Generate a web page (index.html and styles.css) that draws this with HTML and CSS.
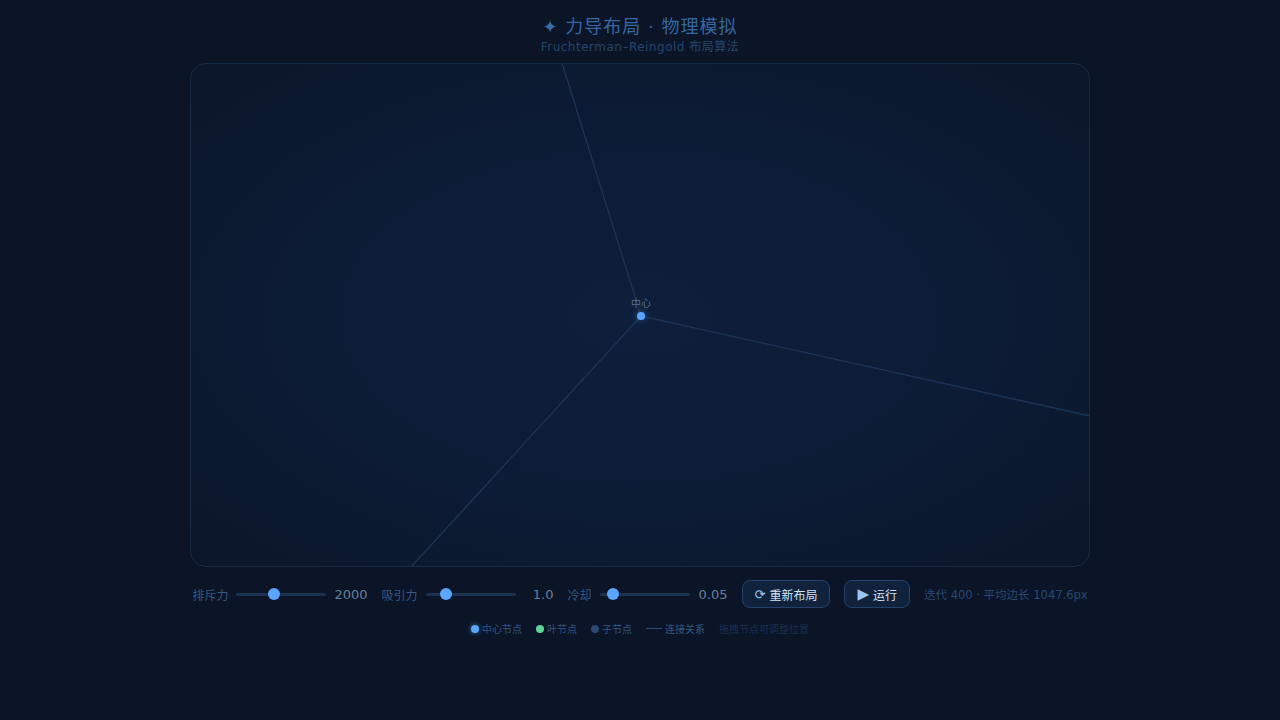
FILE: index.html
```html
<!DOCTYPE html>
<html lang="zh-CN">
<head>
  <meta charset="UTF-8">
  <meta name="viewport" content="width=device-width, initial-scale=1.0">
  <title>力导布局</title>
  <link rel="stylesheet" href="styles.css">
</head>
<body>
  <div class="page">
    <header class="head">
      <h1 class="title"><span class="spark">✦</span> 力导布局 · 物理模拟</h1>
      <p class="subtitle">Fruchterman–Reingold 布局算法</p>
    </header>

    <div class="stage">
      <svg class="edges" viewBox="0 0 900 504" width="900" height="504">
        <line x1="451" y1="253" x2="372" y2="0" />
        <line x1="451" y1="253" x2="900" y2="353" />
        <line x1="451" y1="253" x2="221" y2="504" />
      </svg>
      <div class="node" style="left: 451px; top: 253px;">
        <span class="node-label">中心</span>
      </div>
    </div>

    <div class="controls">
      <label class="ctl">
        <span class="ctl-name">排斥力</span>
        <input type="range" min="0" max="5000" value="2000">
        <span class="ctl-val">2000</span>
      </label>
      <label class="ctl">
        <span class="ctl-name">吸引力</span>
        <input type="range" min="0.1" max="5" step="0.1" value="1.0">
        <span class="ctl-val">1.0</span>
      </label>
      <label class="ctl">
        <span class="ctl-name">冷却</span>
        <input type="range" min="0" max="0.5" step="0.01" value="0.05">
        <span class="ctl-val">0.05</span>
      </label>
      <button class="btn"><span class="ico">⟳</span> 重新布局</button>
      <button class="btn"><span class="ico play">▶</span> 运行</button>
      <span class="stats">迭代 400 · 平均边长 1047.6px</span>
    </div>

    <div class="legend">
      <span class="key"><i class="dot dot-root"></i>中心节点</span>
      <span class="key"><i class="dot dot-leaf"></i>叶节点</span>
      <span class="key"><i class="dot dot-mid"></i>子节点</span>
      <span class="key"><i class="dash"></i>连接关系</span>
      <span class="key hint">拖拽节点可调整位置</span>
    </div>
  </div>
</body>
</html>
```

FILE: styles.css
```css
* {
  box-sizing: border-box;
}

body {
  margin: 0;
  background: #0b1527;
  font-family: "DejaVu Sans", "Noto Sans CJK SC", sans-serif;
  color: #6a7f9a;
}

.page {
  display: flex;
  flex-direction: column;
  align-items: center;
  padding-top: 15px;
}

/* Header */
.head {
  text-align: center;
}

.title {
  margin: 0;
  font-size: 18px;
  font-weight: normal;
  letter-spacing: 1px;
  line-height: 24px;
  color: #3567a0;
}

.spark {
  color: #3a6aa1;
}

.subtitle {
  margin: 0;
  font-size: 12px;
  line-height: 16px;
  letter-spacing: 0.5px;
  color: #24456c;
}

/* Graph canvas */
.stage {
  position: relative;
  width: 900px;
  height: 504px;
  margin-top: 8px;
  border: 1px solid #192b44;
  border-radius: 16px;
  overflow: hidden;
  background: radial-gradient(ellipse at 50% 50%, #0e1f3c 0%, #0c1c35 50%, #0b172a 100%);
}

.edges {
  position: absolute;
  left: -1px;
  top: -1px;
}

.edges line {
  stroke: #1c3556;
  stroke-width: 1.3;
}

.node {
  position: absolute;
  width: 8px;
  height: 8px;
  margin: -5px 0 0 -5px;
  border-radius: 50%;
  background: #5aa6ff;
  box-shadow: 0 0 6px rgba(90, 166, 255, 0.5);
}

.node-label {
  position: absolute;
  left: 50%;
  bottom: 10px;
  transform: translateX(-50%);
  font-size: 10px;
  line-height: 12px;
  color: #56708f;
  white-space: nowrap;
}

/* Controls */
.controls {
  display: flex;
  align-items: center;
  gap: 14px;
  margin-top: 13px;
  height: 28px;
}

.ctl {
  display: flex;
  align-items: center;
  gap: 8px;
}

.ctl-name {
  font-size: 12px;
  color: #345883;
}

.ctl-val {
  min-width: 30px;
  text-align: right;
  font-size: 13px;
  color: #687e99;
}

.ctl input[type="range"] {
  -webkit-appearance: none;
  appearance: none;
  width: 90px;
  height: 3px;
  margin: 0;
  border-radius: 2px;
  background: #1c3150;
  outline: none;
}

.ctl input[type="range"]::-webkit-slider-thumb {
  -webkit-appearance: none;
  width: 12px;
  height: 12px;
  border-radius: 50%;
  background: #5aa6ff;
  border: none;
}

.btn {
  display: flex;
  align-items: center;
  gap: 4px;
  height: 28px;
  padding: 0 12px;
  border: 1px solid #24416a;
  border-radius: 8px;
  background: #11223c;
  color: #d3e3f7;
  font-family: inherit;
  font-size: 12px;
  cursor: pointer;
}

.ico {
  color: #9cc6f2;
  font-size: 13px;
}

.play {
  font-size: 15px;
  line-height: 1;
}

.stats {
  font-size: 11.5px;
  color: #2a4970;
}

/* Legend */
.legend {
  display: flex;
  align-items: center;
  gap: 14px;
  margin-top: 13px;
  font-size: 10px;
  color: #335680;
}

.key {
  display: flex;
  align-items: center;
  gap: 3px;
}

.dot {
  width: 8px;
  height: 8px;
  border-radius: 50%;
}

.dot-root {
  background: #5aa6ff;
  box-shadow: 0 0 5px rgba(90, 166, 255, 0.6);
}

.dot-leaf {
  background: #5fd49a;
}

.dot-mid {
  background: #2a4a74;
}

.dash {
  width: 16px;
  height: 1px;
  background: #2a4a72;
}

.hint {
  color: #1a2f4e;
}
```
